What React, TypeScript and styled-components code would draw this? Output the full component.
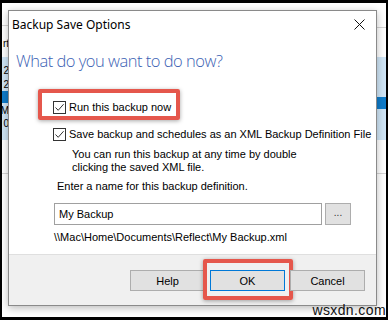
import React from "react";
import styled, { createGlobalStyle } from "styled-components";

const GlobalStyle = createGlobalStyle`
  html, body { margin: 0; padding: 0; background: #fff; }
  * { box-sizing: border-box; }
`;

type Tone = "white" | "light" | "dark";
const toneColor: Record<Tone, string> = {
  white: "#ffffff",
  light: "#cfe5f6",
  dark: "#0f7bc9",
};

const Frame = styled.div`
  position: relative;
  width: 388px;
  height: 320px;
  border-style: solid;
  border-color: #000;
  border-width: 3px 2px 3px 2px;
  background: #fff;
  overflow: hidden;
  font-family: "Liberation Sans", Arial, sans-serif;
`;

const Desktop = styled.div`
  position: relative;
  display: flex;
  justify-content: space-between;
  height: 100%;
`;

const Pane = styled.div<{ $w: number }>`
  width: ${(p) => p.$w}px;
  display: flex;
  flex-direction: column;
  overflow: hidden;
`;

const Band = styled.div<{ $h: number; $tone: Tone; $rule?: boolean }>`
  flex: none;
  height: ${(p) => p.$h}px;
  background: ${(p) => toneColor[p.$tone]};
  border-bottom: ${(p) => (p.$rule ? "1px solid #d4d4d4" : "none")};
  display: flex;
  align-items: center;
  justify-content: flex-end;
  font-size: 10px;
  color: #000;
  white-space: nowrap;
`;

const Dialog = styled.div`
  position: absolute;
  left: 6px;
  top: 7px;
  width: 369px;
  height: 296px;
  display: flex;
  flex-direction: column;
  background: #fff;
  border: 1px solid #8a8a8a;
  box-shadow: 0 2px 8px rgba(0, 0, 0, 0.28);
`;

const TitleBar = styled.div`
  flex: none;
  height: 27px;
  display: flex;
  align-items: center;
  justify-content: space-between;
  padding: 0 11px 0 3px;
  font-family: "Noto Sans", "Liberation Sans", sans-serif;
  font-size: 12px;
  color: #000;
`;

const Body = styled.div`
  flex: 1;
  display: flex;
  flex-direction: column;
  align-items: flex-start;
  padding-left: 7px;
  font-size: 11px;
  line-height: 13px;
  color: #000;
`;

const Heading = styled.div`
  margin-top: 12px;
  height: 22px;
  line-height: 22px;
  font-family: "Open Sans", "Liberation Sans", sans-serif;
  font-weight: 300;
  font-size: 16.5px;
  letter-spacing: -0.5px;
  color: #3b62b4;
`;

const Options = styled.div`
  margin: 29px 0 0 37px;
  display: flex;
  flex-direction: column;
  align-items: flex-start;
`;

const CheckRow = styled.label<{ $gap?: number }>`
  position: relative;
  display: inline-flex;
  align-items: center;
  gap: 3px;
  height: 13px;
  margin-top: ${(p) => p.$gap ?? 0}px;
`;

const Box = styled.span`
  width: 13px;
  height: 13px;
  border: 1px solid #333;
  background: #fff;
  display: flex;
  align-items: center;
  justify-content: center;
`;

const Annotation = styled.span<{ $t: number; $r: number; $b: number; $l: number }>`
  position: absolute;
  top: ${(p) => -p.$t}px;
  right: ${(p) => -p.$r}px;
  bottom: ${(p) => -p.$b}px;
  left: ${(p) => -p.$l}px;
  border: 4px solid #e5574c;
  border-radius: 2px;
  box-shadow: 0 1px 4px rgba(0, 0, 0, 0.35);
  pointer-events: none;
`;

const Description = styled.p`
  margin: 7px 0 0 19px;
`;

const NameLabel = styled.div`
  margin: 6px 0 0 41px;
`;

const InputRow = styled.div`
  margin: 10px 0 0 38px;
  display: flex;
  gap: 3px;
  height: 22px;
`;

const TextInput = styled.div`
  width: 268px;
  height: 22px;
  border: 1px solid #a0a0a0;
  padding-left: 4px;
  display: flex;
  align-items: center;
`;

const SmallButton = styled.div`
  width: 26px;
  height: 22px;
  background: #e1e1e1;
  border: 1px solid #adadad;
  display: flex;
  align-items: center;
  justify-content: center;
  font-size: 10px;
  color: #333;
  padding-bottom: 3px;
`;

const PathText = styled.div`
  margin: 6px 0 0 38px;
`;

const Footer = styled.div`
  flex: none;
  height: 51px;
  background: #f0f0f0;
  border-top: 1px solid #dfdfdf;
  display: flex;
  justify-content: flex-end;
  align-items: flex-start;
  gap: 5px;
  padding: 15px 11px 0 0;
`;

const Button = styled.div<{ $default?: boolean }>`
  position: relative;
  width: 75px;
  height: 21px;
  background: #e1e1e1;
  border: 1px solid ${(p) => (p.$default ? "#0078d7" : "#adadad")};
  display: flex;
  align-items: center;
  justify-content: center;
  font-size: 11px;
  color: #000;
`;

const Watermark = styled.div`
  position: absolute;
  right: 0;
  bottom: 0;
  font-family: "Liberation Sans", Arial, sans-serif;
  font-size: 14px;
  line-height: 14px;
  letter-spacing: 0.4px;
  color: #111;
  z-index: 2;
`;

const leftBands: { h: number; tone: Tone; text?: string; rule?: boolean }[] = [
  { h: 23, tone: "white", rule: true },
  { h: 10, tone: "white" },
  { h: 14, tone: "white", text: "rt" },
  { h: 7, tone: "white" },
  { h: 7, tone: "light" },
  { h: 13, tone: "light", text: "2" },
  { h: 14, tone: "light", text: "2" },
  { h: 12, tone: "dark" },
  { h: 1, tone: "light" },
  { h: 13, tone: "light", text: "M" },
  { h: 13, tone: "light", text: "0" },
  { h: 10, tone: "light" },
  { h: 34, tone: "white", rule: true },
];

const rightBands: { h: number; tone: Tone; rule?: boolean }[] = [
  { h: 25, tone: "white", rule: true },
  { h: 29, tone: "white" },
  { h: 40, tone: "light" },
  { h: 12, tone: "dark" },
  { h: 31, tone: "light" },
  { h: 34, tone: "white", rule: true },
];

const Check = () => (
  <svg width="11" height="11" viewBox="0 0 11 11">
    <polyline points="1.5,5.5 4.2,8.3 9.6,2.2" fill="none" stroke="#333" strokeWidth="1" />
  </svg>
);

const CloseIcon = () => (
  <svg width="11" height="11" viewBox="0 0 11 11">
    <path d="M0.5 0.5 L10.5 10.5 M10.5 0.5 L0.5 10.5" stroke="#111" strokeWidth="1" fill="none" />
  </svg>
);

export default function App() {
  return (
    <>
      <GlobalStyle />
      <Frame>
        <Desktop>
          <Pane $w={7}>
            {leftBands.map((b, i) => (
              <Band key={i} $h={b.h} $tone={b.tone} $rule={b.rule}>
                {b.text}
              </Band>
            ))}
          </Pane>
          <Pane $w={10}>
            {rightBands.map((b, i) => (
              <Band key={i} $h={b.h} $tone={b.tone} $rule={b.rule} />
            ))}
          </Pane>
          <Dialog>
            <TitleBar>
              <span>Backup Save Options</span>
              <CloseIcon />
            </TitleBar>
            <Body>
              <Heading>What do you want to do now?</Heading>
              <Options>
                <CheckRow>
                  <Box>
                    <Check />
                  </Box>
                  <span>Run this backup now</span>
                  <Annotation $t={12} $r={9} $b={6} $l={15} />
                </CheckRow>
                <CheckRow $gap={14}>
                  <Box>
                    <Check />
                  </Box>
                  <span>Save backup and schedules as an XML Backup Definition File</span>
                </CheckRow>
                <Description>
                  You can run this backup at any time by double
                  <br />
                  clicking the saved XML file.
                </Description>
              </Options>
              <NameLabel>Enter a name for this backup definition.</NameLabel>
              <InputRow>
                <TextInput>My Backup</TextInput>
                <SmallButton>...</SmallButton>
              </InputRow>
              <PathText>\\Mac\Home\Documents\Reflect\My Backup.xml</PathText>
            </Body>
            <Footer>
              <Button>Help</Button>
              <Button $default>
                OK
                <Annotation $t={12} $r={9} $b={10} $l={8} />
              </Button>
              <Button>Cancel</Button>
            </Footer>
          </Dialog>
        </Desktop>
        <Watermark>wsxdn.com</Watermark>
      </Frame>
    </>
  );
}
